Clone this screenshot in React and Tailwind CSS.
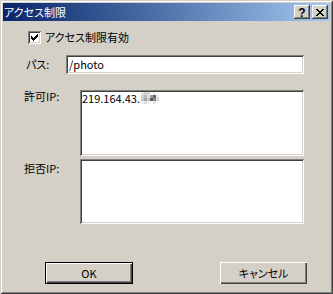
import React from 'react';

const jp = "font-['Noto_Sans_CJK_JP','Noto_Sans',sans-serif] [font-feature-settings:'palt'] text-[11px] leading-[13px]";

function CaptionButton({ children }) {
  return (
    <div className="w-[16px] h-[14px] bg-[#d4d0c8] flex items-center justify-center shadow-[inset_-1px_-1px_0_#404040,inset_1px_1px_0_#fff,inset_-2px_-2px_0_#808080]">
      {children}
    </div>
  );
}

function Sunken({ className, children }) {
  return (
    <div
      className={`bg-white shadow-[inset_1px_1px_0_#808080,inset_-1px_-1px_0_#fff,inset_2px_2px_0_#404040,inset_-2px_-2px_0_#d4d0c8] ${className}`}
    >
      {children}
    </div>
  );
}

// pixelated blur over the last octet
function Mosaic() {
  const cells = [
    '#e6e6e6', '#cfcfcf', '#dcdcdc', '#ffffff', '#f2f2f2', '#ffffff',
    '#d2d2d2', '#bdbdbd', '#e0e0e0', '#9c9c9c', '#6a6a6a', '#e8e8e8',
    '#c6c6c6', '#a8a8a8', '#cccccc', '#5a5a5a', '#8a8a8a', '#d8d8d8',
    '#f0f0f0', '#dedede', '#ececec', '#ffffff', '#e4e4e4', '#ffffff',
  ];
  return (
    <div className="grid grid-cols-6 grid-rows-4 w-[18px] h-[12px] ml-[1px]">
      {cells.map((c, i) => (
        <div key={i} style={{ background: c }} />
      ))}
    </div>
  );
}

export default function App() {
  return (
    <div
      className={`w-[333px] h-[294px] bg-[#d4d0c8] p-[3px] flex flex-col text-black ${jp} shadow-[inset_1px_1px_0_#d4d0c8,inset_-1px_-1px_0_#404040,inset_2px_2px_0_#fff,inset_-2px_-2px_0_#808080]`}
    >
      {/* title bar */}
      <div className="h-[18px] flex items-center justify-between bg-linear-to-r from-[#0a246a] to-[#a6caf0] pl-[1px] pr-[2px]">
        <span className="text-white">アクセス制限</span>
        <div className="flex gap-[2px]">
          <CaptionButton>
            <span className="font-['Liberation_Sans',sans-serif] font-bold text-[12px] leading-[12px] mt-[1px]">?</span>
          </CaptionButton>
          <CaptionButton>
            <svg width="8" height="7" viewBox="0 0 8 7" shapeRendering="crispEdges">
              <path d="M0 0h2v1H0zM6 0h2v1H6zM1 1h2v1H1zM5 1h2v1H5zM2 2h4v1H2zM3 3h2v1H3zM2 4h4v1H2zM1 5h2v1H1zM5 5h2v1H5zM0 6h2v1H0zM6 6h2v1H6z" fill="#000" />
            </svg>
          </CaptionButton>
        </div>
      </div>

      {/* enable checkbox */}
      <div className="flex items-center mt-[10px] pl-[25px] gap-[4px]">
        <Sunken className="w-[13px] h-[13px] flex items-center justify-center">
          <svg width="7" height="7" viewBox="0 0 7 7" shapeRendering="crispEdges">
            <path d="M6 0h1v3H6zM5 1h1v3H5zM4 2h1v3H4zM3 3h1v3H3zM2 4h1v3H2zM1 3h1v3H1zM0 2h1v3H0z" fill="#000" />
          </svg>
        </Sunken>
        <span>アクセス制限有効</span>
      </div>

      {/* path */}
      <div className="flex items-center mt-[11px] pl-[23px]">
        <span className="w-[40px]">パス:</span>
        <Sunken className="w-[238px] h-[19px] flex items-center pl-[3px]">
          <span>/photo</span>
        </Sunken>
      </div>

      {/* allowed IP */}
      <div className="flex items-start mt-[16px] pl-[21px]">
        <span className="w-[56px]">許可IP:</span>
        <Sunken className="w-[224px] h-[66px] pl-[2px] pt-[2px]">
          <div className="flex items-start">
            <span>219.164.43.</span>
            <Mosaic />
          </div>
        </Sunken>
      </div>

      {/* denied IP */}
      <div className="flex items-start mt-[3px] pl-[21px]">
        <span className="w-[56px] mt-[3px]">拒否IP:</span>
        <Sunken className="w-[224px] h-[65px]" />
      </div>

      {/* buttons */}
      <div className="flex mt-[38px] pl-[42px]">
        <button className="w-[88px] h-[22px] border border-black bg-[#d4d0c8] flex items-center justify-center shadow-[inset_1px_1px_0_#fff,inset_-1px_-1px_0_#404040,inset_-2px_-2px_0_#808080]">
          OK
        </button>
        <button className="ml-[87px] w-[87px] h-[22px] bg-[#d4d0c8] flex items-center justify-center shadow-[inset_1px_1px_0_#fff,inset_-1px_-1px_0_#404040,inset_-2px_-2px_0_#808080]">
          キャンセル
        </button>
      </div>
    </div>
  );
}
